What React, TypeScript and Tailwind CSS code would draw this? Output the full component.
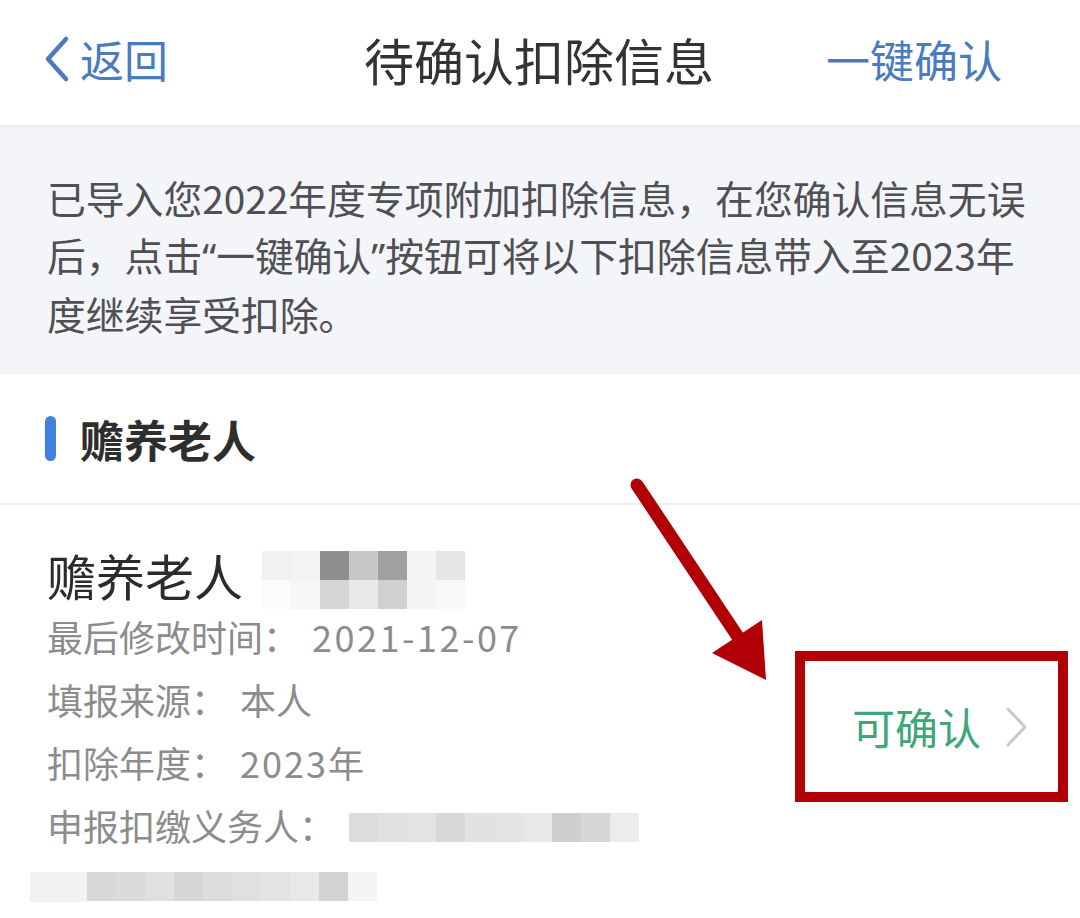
import React from "react";

const FONT = '"Noto Sans CJK SC", "Noto Sans", sans-serif';

function Mosaic({ top, bottom, size = 29 }: { top: string[]; bottom?: string[]; size?: number }) {
  return (
    <div className="flex flex-col">
      <div className="flex">
        {top.map((c, i) => (
          <div key={i} style={{ width: size, height: size, background: c }} />
        ))}
      </div>
      {bottom && (
        <div className="flex">
          {bottom.map((c, i) => (
            <div key={i} style={{ width: size, height: size, background: c }} />
          ))}
        </div>
      )}
    </div>
  );
}

const Q = ({ children }: { children: React.ReactNode }) => (
  <span style={{ fontFamily: '"Noto Sans", sans-serif' }}>{children}</span>
);

export default function App() {
  return (
    <div className="relative w-[1080px] h-[918px] overflow-hidden bg-white" style={{ fontFamily: FONT }}>
      {/* Header */}
      <div className="h-[127px] flex items-center pl-[42px] pb-[8px] border-b-2 border-[#e9ebef] bg-white">
        <div className="flex items-center w-[300px] text-[#4a7bbf]">
          <svg width="30" height="50" viewBox="0 0 30 50" className="mr-[8px]">
            <path d="M24 5 L6 25 L24 45" fill="none" stroke="#4a7bbf" strokeWidth="4.5" strokeLinecap="round" strokeLinejoin="round" />
          </svg>
          <span className="text-[44px] leading-none">返回</span>
        </div>
        <div className="flex-1 text-center text-[50px] leading-none text-[#333] -ml-[90px]">待确认扣除信息</div>
        <div className="text-[44px] leading-none text-[#4a7bbf] mr-[78px]">一键确认</div>
      </div>

      {/* Notice */}
      <div className="bg-[#f3f5f9] h-[247px] pl-[47px] pt-[42px] text-[38.8px] leading-[57px] text-[#4f4f54] whitespace-nowrap">
        <div>已导入您2022年度专项附加扣除信息，在您确认信息无误</div>
        <div>
          后，点击<Q>“</Q>一键确认<Q>”</Q>按钮可将以下扣除信息带入至2023年
        </div>
        <div>度继续享受扣除。</div>
      </div>

      {/* Section header */}
      <div className="h-[131px] flex items-center pl-[45px] border-b-2 border-[#eeeeee]">
        <div className="w-[11px] h-[45px] rounded-full bg-[#3f80e0]" />
        <div className="ml-[24px] text-[44px] font-bold text-[#2e2e2e] leading-none">赡养老人</div>
      </div>

      {/* Card */}
      <div className="flex">
        <div className="flex-1 pl-[47px] pt-[38px]">
          <div className="flex items-center h-[62px]">
            <span className="text-[49px] leading-none text-[#2b2b2b]">赡养老人</span>
            <div className="ml-[19px] mt-[12px]">
              <Mosaic
                top={["#f1f1f1", "#f3f3f3", "#8f8f8f", "#c8c8c8", "#a0a0a0", "#f4f4f4", "#e6e6e6"]}
                bottom={["#fbfbfb", "#f6f6f6", "#d6d6d6", "#e8e8e8", "#d0d0d0", "#f5f5f5", "#f8f8f8"]}
              />
            </div>
          </div>
          <div className="text-[36px] leading-[63px] text-[#8c8c8c] whitespace-nowrap">
            <div>
              最后修改时间：<span className="ml-[13px] tracking-[2.5px]">2021-12-07</span>
            </div>
            <div>
              填报来源：<span className="ml-[13px]">本人</span>
            </div>
            <div>
              扣除年度：<span className="ml-[13px]"><span className="tracking-[2px]">2023</span>年</span>
            </div>
            <div className="flex items-center">
              <span>申报扣缴义务人：</span>
              <div className="ml-[14px] mt-[4px]">
                <Mosaic
                  top={["#dcdcdc", "#e0e0e0", "#e3e3e3", "#d8d8d8", "#e2e2e2", "#e4e4e4", "#e8e8e8", "#cfcfcf", "#d6d6d6", "#ececec"]}
                  size={29}
                />
              </div>
            </div>
            <div className="flex items-center h-[60px] -ml-[17px]">
              <div className="flex">
                <div className="w-[57px] h-[30px] bg-[#f2f2f2]" />
                <Mosaic
                  top={["#d8d8d8", "#dadada", "#e0e0e0", "#d6d6d6", "#dcdcdc", "#e0e0e0", "#e4e4e4", "#e8e8e8", "#d2d2d2", "#f4f4f4"]}
                  size={29}
                />
              </div>
            </div>
          </div>
        </div>
        <div className="self-start mt-[146px] mr-[12px] w-[273px] h-[151px] border-[10px] border-[#b10006] flex items-center pl-[47px]">
          <span className="text-[43px] leading-none text-[#3ea679]">可确认</span>
          <svg width="26" height="44" viewBox="0 0 26 44" className="ml-[23px]">
            <path d="M4 4 L21 22 L4 40" fill="none" stroke="#c8c8c8" strokeWidth="3" strokeLinecap="round" strokeLinejoin="round" />
          </svg>
        </div>
      </div>

      {/* Annotation arrow */}
      <svg className="absolute left-0 top-0 pointer-events-none" width="1080" height="918" viewBox="0 0 1080 918">
        <line x1="637" y1="485" x2="748" y2="652" stroke="#b10006" strokeWidth="13" strokeLinecap="round" />
        <polygon points="766,680 712,653 762,620" fill="#b10006" />
      </svg>
    </div>
  );
}
